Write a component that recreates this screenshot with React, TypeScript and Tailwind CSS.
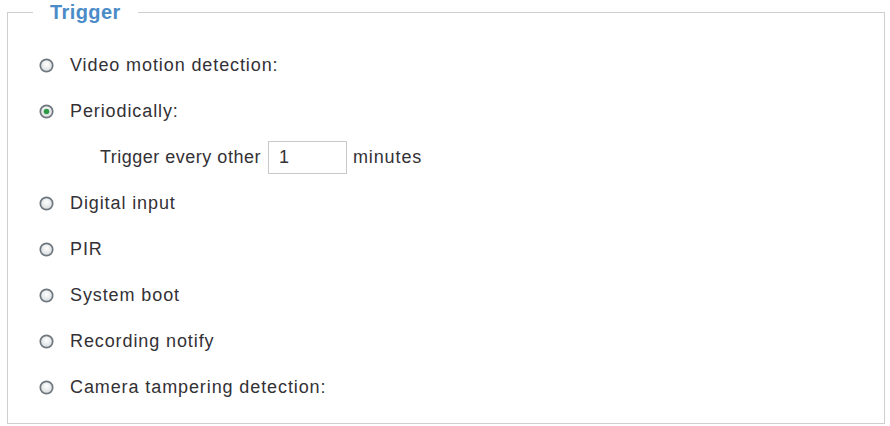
import { useState } from 'react'

const options = [
  { id: 'vmd', label: 'Video motion detection:' },
  { id: 'periodic', label: 'Periodically:' },
  { id: 'di', label: 'Digital input' },
  { id: 'pir', label: 'PIR' },
  { id: 'boot', label: 'System boot' },
  { id: 'recnotify', label: 'Recording notify' },
  { id: 'tamper', label: 'Camera tampering detection:' },
]

function Radio({ checked }: { checked: boolean }) {
  return (
    <svg width="15" height="15" viewBox="0 0 15 15" className="shrink-0">
      <defs>
        <radialGradient id="radioFill" cx="50%" cy="40%" r="60%">
          <stop offset="0%" stopColor="#ffffff" />
          <stop offset="100%" stopColor="#d6dadd" />
        </radialGradient>
      </defs>
      <circle cx="7.5" cy="7.5" r="6.2" fill="url(#radioFill)" stroke="#6f777e" strokeWidth="1.7" />
      {checked && <circle cx="7.5" cy="7.5" r="2.8" fill="#2f9a45" />}
    </svg>
  )
}

export default function App() {
  const [selected, setSelected] = useState('periodic')
  const [minutes, setMinutes] = useState('1')

  return (
    <div className="min-h-[426px] w-[890px] bg-white pl-[7px] font-['Liberation_Sans',Arial,sans-serif] text-[18px] tracking-[0.9px] text-[#333135]">
      <fieldset className="w-[878px] border border-[#cfcfcf] pb-[13px]">
        <legend className="ml-[25px] px-[17px] text-[20px] font-bold leading-[24px] tracking-[0.4px] text-[#4b8cc8]">
          Trigger
        </legend>
        <div className="flex flex-col pt-[18px] pl-[31px]">
          {options.map((opt) => (
            <div key={opt.id}>
              <label
                className="flex h-[46px] cursor-default items-center gap-[16px]"
                onClick={() => setSelected(opt.id)}
              >
                <Radio checked={selected === opt.id} />
                <span>{opt.label}</span>
              </label>
              {opt.id === 'periodic' && (
                <div className="flex h-[46px] items-center pl-[61px]">
                  <span className="tracking-[0.5px]">Trigger every other</span>
                  <input
                    value={minutes}
                    onChange={(e) => setMinutes(e.target.value)}
                    className="ml-[7px] h-[33px] w-[79px] border border-[#c9c9c9] bg-white px-[10px] text-[18px] text-[#333135] outline-none"
                  />
                  <span className="ml-[6px]">minutes</span>
                </div>
              )}
            </div>
          ))}
        </div>
      </fieldset>
    </div>
  )
}
